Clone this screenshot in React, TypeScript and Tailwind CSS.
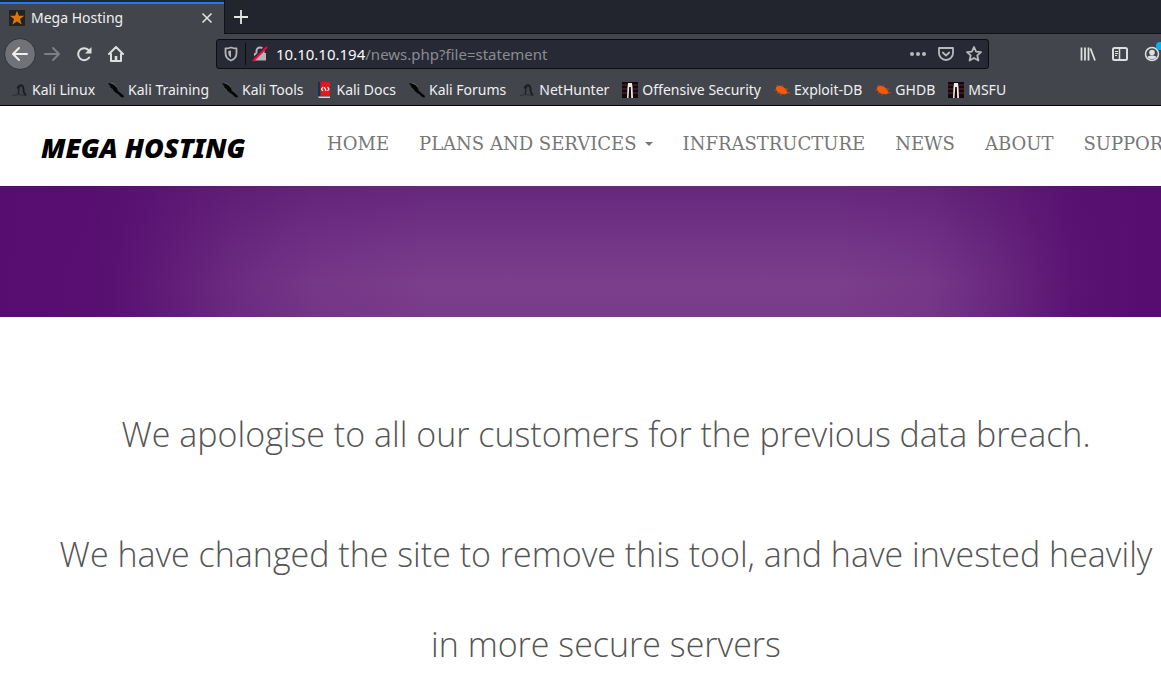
import React from "react";

type MarkKind = "dragon" | "knife" | "book" | "offsec" | "bug";

const bookmarks: { label: string; kind: MarkKind }[] = [
  { label: "Kali Linux", kind: "dragon" },
  { label: "Kali Training", kind: "knife" },
  { label: "Kali Tools", kind: "knife" },
  { label: "Kali Docs", kind: "book" },
  { label: "Kali Forums", kind: "knife" },
  { label: "NetHunter", kind: "dragon" },
  { label: "Offensive Security", kind: "offsec" },
  { label: "Exploit-DB", kind: "bug" },
  { label: "GHDB", kind: "bug" },
  { label: "MSFU", kind: "offsec" },
];

const navItems = ["HOME", "PLANS AND SERVICES", "INFRASTRUCTURE", "NEWS", "ABOUT", "SUPPORT"];

function MarkIcon({ kind }: { kind: MarkKind }) {
  if (kind === "dragon")
    return (
      <svg className="size-4 shrink-0" viewBox="0 0 16 16" fill="none" aria-hidden="true">
        <path d="M5.500 6.500C6 3.500 9 2.500 10.500 4c1.800 2 .5 4 1.300 6 .4 1.200 1.200 2 2.200 3" stroke="#1b1c20" strokeWidth="1.900" />
        <path d="M8 4.500C5.500 6.500 7.500 10 6 12" stroke="#1f2125" strokeWidth="1.500" />
        <path d="M.5 13.800c3-1.500 9-1.500 14 0" stroke="#2a2c31" />
      </svg>
    );
  if (kind === "knife")
    return (
      <svg className="size-4 shrink-0" viewBox="0 0 16 16" aria-hidden="true">
        <path d="M0 1l2 .5L4 2l3 1.500 2 3 1 2.500 2.500 2L16 14l-.5 1.500-2.500-.5-3-3-2-1-2-2-3-2-1-3z" fill="#050505" />
        <path d="M3 .8l3 1.200 3 3M2 6l3 2" stroke="#6d6f74" strokeWidth=".7" fill="none" />
      </svg>
    );
  if (kind === "book")
    return (
      <svg className="size-4 shrink-0" viewBox="0 0 16 16" aria-hidden="true">
        <path d="M2 0h2.500v15H2z" fill="#183153" />
        <path d="M4.500 0H14v14H4.500z" fill="#dc1c1c" />
        <path d="M2 14.500h12V16H3z" fill="#d8d5d5" />
        <path d="M7 5L5.500 7 7 9M11.500 5L13 7l-1.500 2M8.200 5l2 4" stroke="#fff" strokeWidth="1.200" fill="none" />
      </svg>
    );
  if (kind === "bug")
    return (
      <svg className="size-4 shrink-0" viewBox="0 0 16 16" aria-hidden="true">
        <path d="M2 5.500C3 3 7 3 10 5.500c2 1.700 3.200 3.500 3.700 5.500-2 1.500-5 1.800-7.700.5C3.500 10.500 1.500 8 2 5.500z" fill="#f05a0a" />
        <path d="M4 5L3 3M8 4.500l1-1.500M11 7h3M2 8L.5 8M5 10l-2 2M8 11l-1.500 2.500M13 10.500l3 .5" stroke="#c4561c" strokeWidth=".9" fill="none" />
      </svg>
    );
  return (
    <svg className="size-4 shrink-0" viewBox="0 0 16 16" aria-hidden="true">
      <path d="M0 0h16v16H0z" fill="#160708" />
      <path d="M0 3h5M11 3h5M0 7h5M11 7h5M0 11h5M11 11h5" stroke="#553134" strokeWidth="1.200" />
      <path d="M6 1h4l.5 4 .5 11H9.200L8.800 5H7.200L6.500 16H5L5.500 5z" fill="#efeaea" />
    </svg>
  );
}

function Browser() {
  return (
    <header className="border-b border-black bg-[#42454c] font-['Noto_Sans',sans-serif] text-[#f0f0f1]">
      <div className="flex h-[34px] bg-[#23252e]">
        <div className="flex w-56 shrink-0 flex-col pt-[2px]">
          <div className="h-[2px] bg-[#2577f2]" />
          <div className="flex flex-1 items-center bg-[#42454c] pr-2.5 pb-0.5 pl-[9px]">
            <svg className="size-4" viewBox="0 0 16 16" aria-hidden="true">
              <path d="M0 0h16v16H0z" fill="#222" />
              <path d="M8 .8l1.900 5h5.300l-4.200 3.300 1.600 5.500L8 11.400l-4.600 3.200L5 9.100.8 5.800h5.300z" fill="#d97706" />
            </svg>
            <span className="flex-1 pl-1.5 text-sm leading-5">Mega Hosting</span>
            <button aria-label="Close tab" className="p-px">
              <svg className="size-3" viewBox="0 0 12 12" stroke="#e0e0e0" strokeWidth="1.600" aria-hidden="true">
                <path d="M1.500 1.500l9 9M10.500 1.500l-9 9" />
              </svg>
            </button>
          </div>
        </div>
        <div className="flex flex-1 items-center border-b border-l border-[#101218] pl-2">
          <button aria-label="New tab">
            <svg className="size-4" viewBox="0 0 16 16" stroke="#e6e6e6" strokeWidth="1.800" aria-hidden="true">
              <path d="M8 1v14M1 8h14" />
            </svg>
          </button>
        </div>
      </div>

      <div className="flex h-10 items-center overflow-hidden">
        <div className="flex w-54 shrink-0 items-center pl-1">
          <button aria-label="Back" className="flex size-8 shrink-0 items-center justify-center rounded-full border border-[#303238] bg-[#717277]">
            <svg className="size-4" viewBox="0 0 16 16" fill="none" stroke="#eeeeee" strokeWidth="2" strokeLinecap="round" strokeLinejoin="round" aria-hidden="true">
              <path d="M15 8H1.500M7 2L1 8l6 6" />
            </svg>
          </button>
          <button aria-label="Forward" className="flex w-8 justify-center">
            <svg className="size-4" viewBox="0 0 16 16" fill="none" stroke="#7d7f84" strokeWidth="2" strokeLinecap="round" strokeLinejoin="round" aria-hidden="true">
              <path d="M1 8h13.500M9 2l6 6-6 6" />
            </svg>
          </button>
          <button aria-label="Reload" className="flex w-8 justify-center">
            <svg className="size-4" viewBox="0 0 16 16" aria-hidden="true">
              <path d="M13.200 11.500A6 6 0 1 1 12.500 4" fill="none" stroke="#dedede" strokeWidth="2" strokeLinecap="round" />
              <path d="M15.500 1v6.500H9z" fill="#dedede" />
            </svg>
          </button>
          <button aria-label="Home" className="flex w-8 justify-center">
            <svg className="size-4" viewBox="0 0 16 16" fill="none" stroke="#dedede" strokeWidth="2" strokeLinecap="round" strokeLinejoin="round" aria-hidden="true">
              <path d="M1 8l7-7 7 7M3 8v7h10V8" />
              <path d="M8 15v-5" strokeWidth="2.600" strokeLinecap="butt" />
            </svg>
          </button>
        </div>
        <div className="flex h-[30px] min-w-0 flex-1 items-center rounded-[3px] border border-[#0c0d12] bg-[#272935] px-1.5">
          <svg className="size-4 shrink-0" viewBox="0 0 16 16" aria-hidden="true">
            <path d="M8 1.500c2 .7 4 1 5.500 1V7c0 4-2.500 6.500-5.500 7.500C5 13.500 2.500 11 2.500 7V2.500c1.500 0 3.500-.3 5.500-1z" fill="none" stroke="#b5b5b9" strokeWidth="1.800" strokeLinejoin="round" />
            <path d="M8 4.500v7C6.300 10.500 5.300 9 5.300 7V5z" fill="#b5b5b9" />
          </svg>
          <div className="mx-1.5 h-[22px] w-px shrink-0 bg-[#0c0d12]" />
          <svg className="size-4 shrink-0" viewBox="0 0 16 16" aria-hidden="true">
            <path d="M2 7h12v7.500H2z" fill="#b5b5b9" />
            <path d="M4.500 8V5a3.500 3.500 0 0 1 7 0v3" fill="none" stroke="#b5b5b9" strokeWidth="2" />
            <path d="M0 14L14 0" stroke="#272935" strokeWidth="2" />
            <path d="M1 15L15 1" stroke="#f2093d" strokeWidth="2" />
          </svg>
          <div className="relative ml-2 h-5 min-w-0 flex-1 text-[15px] leading-5">
            <input aria-label="Address" defaultValue="10.10.10.194/news.php?file=statement" className="absolute inset-0 size-full bg-transparent text-transparent outline-none" />
            <div aria-hidden="true" className="pointer-events-none text-[#8b8c93]">
              <span className="text-[#f9f9fa]">10.10.10.194</span>/news.php?file=statement
            </div>
          </div>
          <div className="flex items-center gap-3">
            <button aria-label="Page actions">
              <svg className="size-4" viewBox="0 0 16 16" fill="#b9b9bd" aria-hidden="true">
                <circle cx="2" cy="8" r="2" /><circle cx="8" cy="8" r="2" /><circle cx="14" cy="8" r="2" />
              </svg>
            </button>
            <button aria-label="Save to Pocket">
              <svg className="size-4" viewBox="0 0 16 16" fill="none" stroke="#b9b9bd" strokeWidth="1.800" strokeLinecap="round" strokeLinejoin="round" aria-hidden="true">
                <path d="M1 2h14v5a7 7 0 0 1-14 0z" /><path d="M4.800 6.500L8 9.500l3.200-3" />
              </svg>
            </button>
            <button aria-label="Bookmark this page">
              <svg className="size-4" viewBox="0 0 16 16" fill="none" stroke="#b9b9bd" strokeWidth="1.800" strokeLinejoin="round" aria-hidden="true">
                <path d="M8 1l2.100 4.600 4.900.5-3.700 3.300 1.100 5.100L8 12l-4.400 2.500 1.100-5.100L1 6.100l4.900-.5z" />
              </svg>
            </button>
          </div>
        </div>
        <div className="flex w-43 shrink-0 items-center justify-end gap-4">
          <button aria-label="Library">
            <svg className="size-4" viewBox="0 0 16 16" stroke="#dedee0" strokeWidth="1.800" aria-hidden="true">
              <path d="M1.500 1.500v13M5 1.500v13M8.500 1.500v13M10.500 2.500L15 14.500" />
            </svg>
          </button>
          <button aria-label="Sidebars">
            <svg className="size-4" viewBox="0 0 16 16" fill="none" stroke="#dedee0" aria-hidden="true">
              <rect x="1" y="2" width="14" height="12" rx="1.500" strokeWidth="2" />
              <path d="M7.500 3v10" strokeWidth="1.500" /><path d="M3 5.500h3M3 7.500h3M3 9.500h2" />
            </svg>
          </button>
          <button aria-label="Account" className="relative mr-px">
            <svg className="size-4" viewBox="0 0 16 16" fill="none" stroke="#dedee0" strokeWidth="1.500" aria-hidden="true">
              <circle cx="8" cy="8" r="6.500" /><circle cx="8" cy="6.500" r="2.800" fill="#dedee0" stroke="none" />
              <path d="M3.500 11c1-2 8-2 9 0C11 14 5 14 3.500 11z" fill="#dedee0" stroke="none" />
            </svg>
            <span className="absolute -top-1 -right-1 size-2 rounded-full bg-[#00b3f4]" />
          </button>
        </div>
      </div>

      <nav aria-label="Bookmarks" className="flex h-[31px] items-center gap-[13px] overflow-hidden pl-3">
        {bookmarks.map((b) => (
          <a key={b.label} href="#" className="flex shrink-0 items-center gap-1 text-sm leading-5">
            <MarkIcon kind={b.kind} />
            {b.label}
          </a>
        ))}
      </nav>
    </header>
  );
}

export default function App() {
  return (
    <div className="min-h-screen overflow-hidden bg-white">
      <Browser />
      <div className="flex h-20 items-start overflow-hidden">
        <a href="#" className="w-78 shrink-0 pt-[26px] pl-[41px] font-['Noto_Sans',sans-serif] text-[27px] leading-8 font-black whitespace-nowrap text-black italic">
          MEGA HOSTING
        </a>
        <nav aria-label="Main" className="flex shrink-0 pt-[25px] font-['DejaVu_Serif',serif] text-lg leading-[26px] text-[#777]">
          {navItems.map((item) => (
            <a key={item} href="#" className="flex items-center px-[15px] whitespace-nowrap">
              {item}
              {item === "PLANS AND SERVICES" && (
                <svg className="ml-2 h-1 w-2" viewBox="0 0 8 4" fill="#777" aria-hidden="true">
                  <path d="M0 0h8L4 4z" />
                </svg>
              )}
            </a>
          ))}
        </nav>
      </div>
      <div className="h-[131px] bg-[linear-gradient(90deg,#560d6f_0%,rgba(86,13,111,0.97)_8%,rgba(86,13,111,0.78)_13%,rgba(86,13,111,0.4)_20%,rgba(86,13,111,0.14)_27%,rgba(86,13,111,0)_37%,rgba(86,13,111,0)_72%,rgba(86,13,111,0.12)_80%,rgba(86,13,111,0.45)_86%,rgba(86,13,111,0.85)_92%,#560d6f_98%),linear-gradient(180deg,#65277b_0%,#733687_45%,#7a3e8b_75%,#783b8a_100%)]" />
      <main className="pt-[72px] pl-[51px] text-center font-['Open_Sans',sans-serif] text-[34px] leading-[90px] font-light text-[#555]">
        <p className="mb-[30px]">We apologise to all our customers for the previous data breach.</p>
        <p>We have changed the site to remove this tool, and have invested heavily in more secure servers</p>
      </main>
    </div>
  );
}
